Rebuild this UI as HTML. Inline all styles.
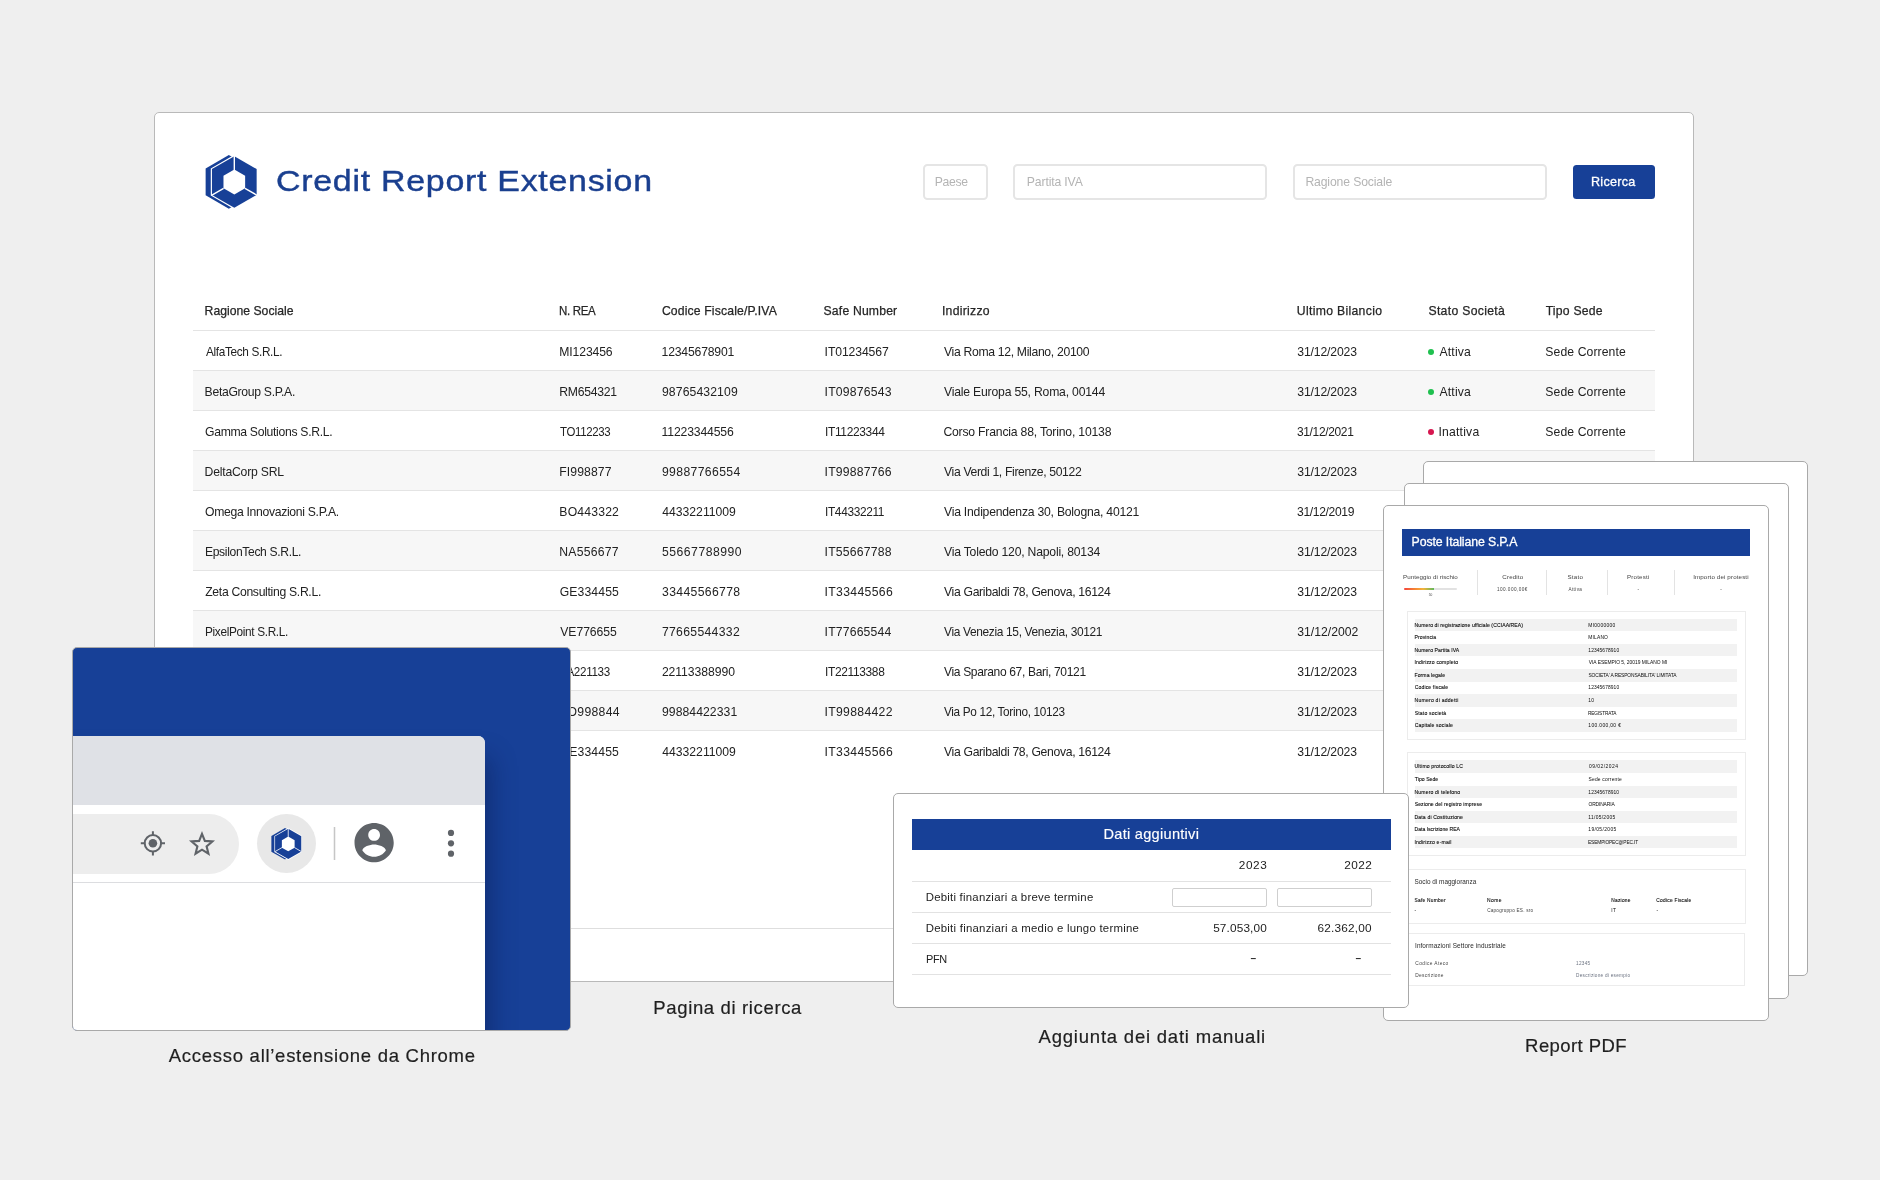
<!DOCTYPE html>
<html lang="it"><head><meta charset="utf-8"><title>Credit Report Extension</title>
<style>
*{box-sizing:border-box;margin:0;padding:0}
html,body{width:1880px;height:1180px;overflow:hidden}
body{background:#efefef;font-family:"Liberation Sans",sans-serif;color:#222;position:relative}
#root{position:absolute;left:0;top:0;width:1880px;height:1180px;will-change:transform}
.abs{position:absolute}
.t{position:absolute;white-space:nowrap;line-height:1}
.panel{position:absolute;left:154px;top:112px;width:1540px;height:870px;background:#fff;border:1px solid #b9b9b9;border-radius:5px}
.title{color:#1a3f8f;-webkit-text-stroke:0.4px #1a3f8f}
.inp{position:absolute;height:36px;top:164px;border:2px solid #e5e5e5;border-radius:4.5px;background:#fff}
.ph{color:#b4b4b4}
.btn{position:absolute;left:1573px;top:165px;width:81.5px;height:34px;background:#174097;border-radius:3.5px}
.th{color:#262626;-webkit-text-stroke:0.25px #262626}
.td{color:#222}
.rowbg{position:absolute;left:193px;width:1461.5px;height:40px;background:#f7f7f7}
.line{position:absolute;left:193px;width:1461.5px;height:1px;background:#e4e4e4}
.dot{position:absolute;width:6px;height:6px;border-radius:50%}
.cap{color:#1f1f1f;-webkit-text-stroke:0.2px #1f1f1f}
.card{position:absolute;background:#fff;border:1px solid #a9a9a9;border-radius:5px}
.w{color:#fff}
.ws{color:#fff;-webkit-text-stroke:0.3px #fff}
.wm{color:#fff;-webkit-text-stroke:0.15px #fff}
.p5{color:#0a0a0a}
.p5b{color:#0a0a0a;-webkit-text-stroke:0.1px #0a0a0a}
.g5{color:#444}
.g6{color:#6b7280}
.p6{color:#2b2b2b}
.stripe{position:absolute;left:1414.7px;width:322.5px;height:12.4px;background:#f2f2f2}
.pbox{position:absolute;border:1px solid #ececec;background:#fff}
</style></head><body><div id="root">

<div class="panel"></div>
<svg width="0" height="0" style="position:absolute"><defs>
<symbol id="logo" viewBox="0 0 52 54">
<g transform="translate(-205,-155)">
<polygon fill="#174097" points="228.84,155.1 252.05,168.5 252.05,195.3 228.84,208.7 205.63,195.3 205.63,168.5"/>
<polygon fill="#174097" stroke="#fff" stroke-width="2.4" paint-order="stroke" stroke-linejoin="miter" points="234.31,156.2 256.65,169.1 256.65,194.9 234.31,207.8 211.97,194.9 211.97,169.1"/>
<polygon fill="#fff" points="234.31,169.6 245.14,175.85 245.14,188.35 234.31,194.6 223.48,188.35 223.48,175.85"/>
<path d="M234.31,155.5 V170 M223.6,188.3 L211.5,195.3 M245.0,188.3 L257.1,195.3" stroke="#fff" stroke-width="1.4" fill="none"/>
</g></symbol></defs></svg>
<svg class="abs" style="left:205px;top:155px" width="52" height="54"><use href="#logo"/></svg>
<span class="t title" style="font-size:29px;top:167px;letter-spacing:0.616px;transform:scaleX(1.1700);transform-origin:0 0;left:275.70px;">Credit Report Extension</span>
<div class="inp" style="left:923px;width:65px"></div>
<div class="inp" style="left:1013px;width:254px"></div>
<div class="inp" style="left:1293px;width:254px"></div>
<span class="t ph" style="font-size:12.2px;top:176px;letter-spacing:-0.281px;left:934.72px;">Paese</span>
<span class="t ph" style="font-size:12.2px;top:176px;letter-spacing:-0.132px;left:1026.82px;">Partita IVA</span>
<span class="t ph" style="font-size:12.2px;top:176px;letter-spacing:-0.132px;left:1305.42px;">Ragione Sociale</span>
<div class="btn"></div>
<span class="t ws" style="font-size:12.6px;top:176px;letter-spacing:0.289px;left:1590.94px;">Ricerca</span>
<span class="t th" style="font-size:12.2px;top:305px;letter-spacing:0.011px;left:204.62px;">Ragione Sociale</span>
<span class="t th" style="font-size:12.2px;top:305px;letter-spacing:-0.350px;transform:scaleX(0.9420);transform-origin:0 0;left:559.38px;">N. REA</span>
<span class="t th" style="font-size:12.2px;top:305px;letter-spacing:0.152px;left:661.89px;">Codice Fiscale/P.IVA</span>
<span class="t th" style="font-size:12.2px;top:305px;letter-spacing:0.181px;left:823.55px;">Safe Number</span>
<span class="t th" style="font-size:12.2px;top:305px;letter-spacing:0.293px;left:941.90px;">Indirizzo</span>
<span class="t th" style="font-size:12.2px;top:305px;letter-spacing:0.326px;left:1296.79px;">Ultimo Bilancio</span>
<span class="t th" style="font-size:12.2px;top:305px;letter-spacing:0.322px;left:1428.45px;">Stato Società</span>
<span class="t th" style="font-size:12.2px;top:305px;letter-spacing:0.223px;left:1545.66px;">Tipo Sede</span>
<div class="line" style="top:330px"></div>
<div class="line" style="top:370px"></div>
<span class="t td" style="font-size:12.2px;top:346px;letter-spacing:-0.350px;transform:scaleX(0.9677);transform-origin:0 0;left:205.60px;">AlfaTech S.R.L.</span>
<span class="t td" style="font-size:12.2px;top:346px;letter-spacing:-0.124px;left:559.32px;">MI123456</span>
<span class="t td" style="font-size:12.2px;top:346px;letter-spacing:-0.184px;left:661.59px;">12345678901</span>
<span class="t td" style="font-size:12.2px;top:346px;letter-spacing:-0.104px;left:824.60px;">IT01234567</span>
<span class="t td" style="font-size:12.2px;top:346px;letter-spacing:-0.320px;left:944.00px;">Via Roma 12, Milano, 20100</span>
<span class="t td" style="font-size:12.2px;top:346px;letter-spacing:-0.138px;left:1297.27px;">31/12/2023</span>
<span class="t td" style="font-size:12.2px;top:346px;letter-spacing:0.168px;left:1439.50px;">Attiva</span>
<span class="t td" style="font-size:12.2px;top:346px;letter-spacing:0.090px;left:1545.35px;">Sede Corrente</span>
<div class="dot" style="left:1427.7px;top:348.5px;background:#1fc04f"></div>
<div class="rowbg" style="top:370.5px"></div>
<div class="line" style="top:410px"></div>
<span class="t td" style="font-size:12.2px;top:386px;letter-spacing:-0.309px;left:204.62px;">BetaGroup S.P.A.</span>
<span class="t td" style="font-size:12.2px;top:386px;letter-spacing:-0.276px;left:559.32px;">RM654321</span>
<span class="t td" style="font-size:12.2px;top:386px;letter-spacing:0.120px;left:661.95px;">98765432109</span>
<span class="t td" style="font-size:12.2px;top:386px;letter-spacing:0.211px;left:824.60px;">IT09876543</span>
<span class="t td" style="font-size:12.2px;top:386px;letter-spacing:-0.196px;left:944.00px;">Viale Europa 55, Roma, 00144</span>
<span class="t td" style="font-size:12.2px;top:386px;letter-spacing:-0.138px;left:1297.27px;">31/12/2023</span>
<span class="t td" style="font-size:12.2px;top:386px;letter-spacing:0.168px;left:1439.50px;">Attiva</span>
<span class="t td" style="font-size:12.2px;top:386px;letter-spacing:0.090px;left:1545.35px;">Sede Corrente</span>
<div class="dot" style="left:1427.7px;top:388.5px;background:#1fc04f"></div>
<div class="line" style="top:450px"></div>
<span class="t td" style="font-size:12.2px;top:426px;letter-spacing:-0.307px;left:204.99px;">Gamma Solutions S.R.L.</span>
<span class="t td" style="font-size:12.2px;top:426px;letter-spacing:-0.350px;transform:scaleX(0.9380);transform-origin:0 0;left:560.07px;">TO112233</span>
<span class="t td" style="font-size:12.2px;top:426px;letter-spacing:-0.155px;left:661.59px;">11223344556</span>
<span class="t td" style="font-size:12.2px;top:426px;letter-spacing:-0.350px;transform:scaleX(0.9819);transform-origin:0 0;left:824.62px;">IT11223344</span>
<span class="t td" style="font-size:12.2px;top:426px;letter-spacing:-0.195px;left:943.39px;">Corso Francia 88, Torino, 10138</span>
<span class="t td" style="font-size:12.2px;top:426px;letter-spacing:-0.350px;transform:scaleX(0.9818);transform-origin:0 0;left:1297.28px;">31/12/2021</span>
<span class="t td" style="font-size:12.2px;top:426px;letter-spacing:0.213px;left:1438.40px;">Inattiva</span>
<span class="t td" style="font-size:12.2px;top:426px;letter-spacing:0.090px;left:1545.35px;">Sede Corrente</span>
<div class="dot" style="left:1427.7px;top:428.5px;background:#d6164f"></div>
<div class="rowbg" style="top:450.5px"></div>
<div class="line" style="top:490px"></div>
<span class="t td" style="font-size:12.2px;top:466px;letter-spacing:-0.209px;left:204.62px;">DeltaCorp SRL</span>
<span class="t td" style="font-size:12.2px;top:466px;letter-spacing:0.097px;left:559.32px;">FI998877</span>
<span class="t td" style="font-size:12.2px;top:466px;letter-spacing:0.375px;left:661.95px;">99887766554</span>
<span class="t td" style="font-size:12.2px;top:466px;letter-spacing:0.200px;left:824.60px;">IT99887766</span>
<span class="t td" style="font-size:12.2px;top:466px;letter-spacing:-0.350px;transform:scaleX(1.0000);transform-origin:0 0;left:944.00px;">Via Verdi 1, Firenze, 50122</span>
<span class="t td" style="font-size:12.2px;top:466px;letter-spacing:-0.138px;left:1297.27px;">31/12/2023</span>
<span class="t td" style="font-size:12.2px;top:466px;letter-spacing:0.168px;left:1439.50px;">Attiva</span>
<span class="t td" style="font-size:12.2px;top:466px;letter-spacing:0.090px;left:1545.35px;">Sede Corrente</span>
<div class="dot" style="left:1427.7px;top:468.5px;background:#1fc04f"></div>
<div class="line" style="top:530px"></div>
<span class="t td" style="font-size:12.2px;top:506px;letter-spacing:-0.316px;left:205.05px;">Omega Innovazioni S.P.A.</span>
<span class="t td" style="font-size:12.2px;top:506px;letter-spacing:0.187px;left:559.32px;">BO443322</span>
<span class="t td" style="font-size:12.2px;top:506px;letter-spacing:-0.006px;left:662.26px;">44332211009</span>
<span class="t td" style="font-size:12.2px;top:506px;letter-spacing:-0.350px;transform:scaleX(0.9742);transform-origin:0 0;left:824.63px;">IT44332211</span>
<span class="t td" style="font-size:12.2px;top:506px;letter-spacing:-0.227px;left:944.00px;">Via Indipendenza 30, Bologna, 40121</span>
<span class="t td" style="font-size:12.2px;top:506px;letter-spacing:-0.350px;transform:scaleX(0.9924);transform-origin:0 0;left:1297.28px;">31/12/2019</span>
<span class="t td" style="font-size:12.2px;top:506px;letter-spacing:0.213px;left:1438.40px;">Inattiva</span>
<span class="t td" style="font-size:12.2px;top:506px;letter-spacing:0.090px;left:1545.35px;">Sede Corrente</span>
<div class="dot" style="left:1427.7px;top:508.5px;background:#d6164f"></div>
<div class="rowbg" style="top:530.5px"></div>
<div class="line" style="top:570px"></div>
<span class="t td" style="font-size:12.2px;top:546px;letter-spacing:-0.350px;transform:scaleX(0.9940);transform-origin:0 0;left:204.63px;">EpsilonTech S.R.L.</span>
<span class="t td" style="font-size:12.2px;top:546px;letter-spacing:0.226px;left:559.32px;">NA556677</span>
<span class="t td" style="font-size:12.2px;top:546px;letter-spacing:0.501px;left:662.01px;">55667788990</span>
<span class="t td" style="font-size:12.2px;top:546px;letter-spacing:0.200px;left:824.60px;">IT55667788</span>
<span class="t td" style="font-size:12.2px;top:546px;letter-spacing:-0.211px;left:944.00px;">Via Toledo 120, Napoli, 80134</span>
<span class="t td" style="font-size:12.2px;top:546px;letter-spacing:-0.138px;left:1297.27px;">31/12/2023</span>
<span class="t td" style="font-size:12.2px;top:546px;letter-spacing:0.168px;left:1439.50px;">Attiva</span>
<span class="t td" style="font-size:12.2px;top:546px;letter-spacing:0.090px;left:1545.35px;">Sede Corrente</span>
<div class="dot" style="left:1427.7px;top:548.5px;background:#1fc04f"></div>
<div class="line" style="top:610px"></div>
<span class="t td" style="font-size:12.2px;top:586px;letter-spacing:-0.311px;left:205.23px;">Zeta Consulting S.R.L.</span>
<span class="t td" style="font-size:12.2px;top:586px;letter-spacing:0.126px;left:559.69px;">GE334455</span>
<span class="t td" style="font-size:12.2px;top:586px;letter-spacing:0.341px;left:662.07px;">33445566778</span>
<span class="t td" style="font-size:12.2px;top:586px;letter-spacing:0.344px;left:824.60px;">IT33445566</span>
<span class="t td" style="font-size:12.2px;top:586px;letter-spacing:-0.326px;left:944.00px;">Via Garibaldi 78, Genova, 16124</span>
<span class="t td" style="font-size:12.2px;top:586px;letter-spacing:-0.138px;left:1297.27px;">31/12/2023</span>
<span class="t td" style="font-size:12.2px;top:586px;letter-spacing:0.168px;left:1439.50px;">Attiva</span>
<span class="t td" style="font-size:12.2px;top:586px;letter-spacing:0.090px;left:1545.35px;">Sede Corrente</span>
<div class="dot" style="left:1427.7px;top:588.5px;background:#1fc04f"></div>
<div class="rowbg" style="top:610.5px"></div>
<div class="line" style="top:650px"></div>
<span class="t td" style="font-size:12.2px;top:626px;letter-spacing:-0.350px;transform:scaleX(0.9704);transform-origin:0 0;left:204.65px;">PixelPoint S.R.L.</span>
<span class="t td" style="font-size:12.2px;top:626px;letter-spacing:-0.069px;left:560.30px;">VE776655</span>
<span class="t td" style="font-size:12.2px;top:626px;letter-spacing:0.326px;left:661.89px;">77665544332</span>
<span class="t td" style="font-size:12.2px;top:626px;letter-spacing:0.180px;left:824.60px;">IT77665544</span>
<span class="t td" style="font-size:12.2px;top:626px;letter-spacing:-0.350px;transform:scaleX(0.9797);transform-origin:0 0;left:944.00px;">Via Venezia 15, Venezia, 30121</span>
<span class="t td" style="font-size:12.2px;top:626px;letter-spacing:0.013px;left:1297.27px;">31/12/2002</span>
<span class="t td" style="font-size:12.2px;top:626px;letter-spacing:0.213px;left:1438.40px;">Inattiva</span>
<span class="t td" style="font-size:12.2px;top:626px;letter-spacing:0.090px;left:1545.35px;">Sede Corrente</span>
<div class="dot" style="left:1427.7px;top:628.5px;background:#d6164f"></div>
<div class="line" style="top:690px"></div>
<span class="t td" style="font-size:12.2px;top:666px;left:205.05px;letter-spacing:-0.4px;">Sigma Digital S.R.L.</span>
<span class="t td" style="font-size:12.2px;top:666px;letter-spacing:-0.350px;transform:scaleX(0.9550);transform-origin:0 0;left:559.37px;">BA221133</span>
<span class="t td" style="font-size:12.2px;top:666px;letter-spacing:-0.061px;left:661.89px;">22113388990</span>
<span class="t td" style="font-size:12.2px;top:666px;letter-spacing:-0.350px;transform:scaleX(0.9799);transform-origin:0 0;left:824.62px;">IT22113388</span>
<span class="t td" style="font-size:12.2px;top:666px;letter-spacing:-0.350px;transform:scaleX(0.9881);transform-origin:0 0;left:944.00px;">Via Sparano 67, Bari, 70121</span>
<span class="t td" style="font-size:12.2px;top:666px;letter-spacing:-0.138px;left:1297.27px;">31/12/2023</span>
<span class="t td" style="font-size:12.2px;top:666px;letter-spacing:0.168px;left:1439.50px;">Attiva</span>
<span class="t td" style="font-size:12.2px;top:666px;letter-spacing:0.090px;left:1545.35px;">Sede Corrente</span>
<div class="dot" style="left:1427.7px;top:668.5px;background:#1fc04f"></div>
<div class="rowbg" style="top:690.5px"></div>
<div class="line" style="top:730px"></div>
<span class="t td" style="font-size:12.2px;top:706px;left:204.62px;letter-spacing:-0.4px;">Kappa Service S.R.L.</span>
<span class="t td" style="font-size:12.2px;top:706px;letter-spacing:0.307px;left:560.06px;">TO998844</span>
<span class="t td" style="font-size:12.2px;top:706px;letter-spacing:0.070px;left:661.95px;">99884422331</span>
<span class="t td" style="font-size:12.2px;top:706px;letter-spacing:0.307px;left:824.60px;">IT99884422</span>
<span class="t td" style="font-size:12.2px;top:706px;letter-spacing:-0.350px;transform:scaleX(0.9677);transform-origin:0 0;left:944.00px;">Via Po 12, Torino, 10123</span>
<span class="t td" style="font-size:12.2px;top:706px;letter-spacing:-0.138px;left:1297.27px;">31/12/2023</span>
<span class="t td" style="font-size:12.2px;top:706px;letter-spacing:0.168px;left:1439.50px;">Attiva</span>
<span class="t td" style="font-size:12.2px;top:706px;letter-spacing:0.090px;left:1545.35px;">Sede Corrente</span>
<div class="dot" style="left:1427.7px;top:708.5px;background:#1fc04f"></div>
<span class="t td" style="font-size:12.2px;top:746px;letter-spacing:-0.311px;left:205.23px;">Zeta Consulting S.R.L.</span>
<span class="t td" style="font-size:12.2px;top:746px;letter-spacing:0.126px;left:559.69px;">GE334455</span>
<span class="t td" style="font-size:12.2px;top:746px;letter-spacing:-0.006px;left:662.26px;">44332211009</span>
<span class="t td" style="font-size:12.2px;top:746px;letter-spacing:0.344px;left:824.60px;">IT33445566</span>
<span class="t td" style="font-size:12.2px;top:746px;letter-spacing:-0.326px;left:944.00px;">Via Garibaldi 78, Genova, 16124</span>
<span class="t td" style="font-size:12.2px;top:746px;letter-spacing:-0.138px;left:1297.27px;">31/12/2023</span>
<span class="t td" style="font-size:12.2px;top:746px;letter-spacing:0.168px;left:1439.50px;">Attiva</span>
<span class="t td" style="font-size:12.2px;top:746px;letter-spacing:0.090px;left:1545.35px;">Sede Corrente</span>
<div class="dot" style="left:1427.7px;top:748.5px;background:#1fc04f"></div>
<div class="line" style="left:155px;width:1538px;top:928px;background:#dedede"></div>
<!-- chrome extension card -->
<div class="card" style="left:72px;top:647px;width:499px;height:384px;background:#174097;overflow:hidden">
 <div class="abs" style="left:-73px;top:-648px;width:1880px;height:1180px">
  <div class="abs" style="left:20px;top:736px;width:465px;height:330px;border-radius:0 7px 0 0;background:#fff;box-shadow:13px 14px 24px -8px rgba(6,18,66,.42)"></div>
  <div class="abs" style="left:20px;top:736px;width:465px;height:69px;border-radius:0 7px 0 0;background:#dfe1e6"></div>
  <div class="abs" style="left:60px;top:882px;width:425px;height:1px;background:#dcdde0"></div>
  <div class="abs" style="left:0px;top:813.6px;width:239.4px;height:60px;border-radius:30px;background:#ededed"></div>
  <div class="abs" style="left:256.8px;top:813.8px;width:59.4px;height:59.4px;border-radius:50%;background:#e8e8e8"></div>
  <svg class="abs" style="left:271px;top:827.8px" width="30.6" height="31.8"><use href="#logo"/></svg>
  <div class="abs" style="left:333px;top:826.5px;width:3px;height:33.8px;background:linear-gradient(90deg,#f0f0f0 0,#f0f0f0 33.3%,#c6c6c6 33.3%,#c6c6c6 66.6%,#f0f0f0 66.6%)"></div>
  <svg class="abs" style="left:73px;top:648px" width="498" height="383" viewBox="73 648 498 383">
    <g fill="none" stroke="#5f6368" stroke-width="2">
      <circle cx="152.9" cy="843.3" r="8.2"/>
      <path d="M152.9,831.2V835.6M152.9,851V855.4M140.8,843.3H145.2M160.6,843.3H165"/>
    </g>
    <circle cx="152.9" cy="843.3" r="4.3" fill="#5f6368"/>
    <path fill="none" stroke="#5f6368" stroke-width="2.1" stroke-linejoin="miter" d="M202,833.8 L204.85,840.9 L212.4,841.45 L206.6,846.35 L208.45,853.75 L202,849.7 L195.55,853.75 L197.4,846.35 L191.6,841.45 L199.15,840.9 Z"/>
    <g transform="translate(350.6,819.2) scale(1.96)"><path fill="#5f6368" d="M12 2C6.48 2 2 6.48 2 12s4.48 10 10 10 10-4.48 10-10S17.52 2 12 2zm0 3c1.66 0 3 1.34 3 3s-1.34 3-3 3-3-1.34-3-3 1.34-3 3-3zm0 14.2c-2.5 0-4.71-1.28-6-3.22.03-1.99 4-3.08 6-3.08 1.99 0 5.97 1.09 6 3.08-1.29 1.94-3.5 3.22-6 3.22z"/></g>
    <g fill="#5f6368"><circle cx="451" cy="832.9" r="3.1"/><circle cx="451" cy="843.3" r="3.1"/><circle cx="451" cy="853.7" r="3.1"/></g>
  </svg>
 </div>
</div>

<div class="card" style="left:1423px;top:461px;width:385px;height:515px"></div>
<div class="card" style="left:1404px;top:483px;width:385px;height:516px"></div>
<div class="card" style="left:1383px;top:505px;width:386px;height:516px"></div>
<div class="abs" style="left:1402px;top:528.8px;width:347.8px;height:27.1px;background:#174097"></div>
<span class="t ws" style="font-size:12.3px;top:536px;letter-spacing:-0.107px;left:1411.62px;">Poste Italiane S.P.A</span>
<span class="t g5" style="font-size:6.2px;top:574px;letter-spacing:0.034px;left:1403.10px;">Punteggio di rischio</span>
<div class="abs" style="left:1403.6px;top:587.9px;width:53.8px;height:1.7px;border-radius:1px;background:linear-gradient(90deg,#f4433c 0,#f58a34 22%,#f3b33d 36%,#5cb85c 57%,#5cb85c 57.2%,#e2e2e2 57.2%)"></div>
<span class="t g5" style="font-size:3.2px;top:594px;left:1428.82px;">50</span>
<div class="abs" style="left:1477.4px;top:570px;width:1px;height:25.4px;background:#e3e3e3"></div>
<div class="abs" style="left:1545.6px;top:570px;width:1px;height:25.4px;background:#e3e3e3"></div>
<div class="abs" style="left:1606.5px;top:570px;width:1px;height:25.4px;background:#e3e3e3"></div>
<div class="abs" style="left:1674.1px;top:570px;width:1px;height:25.4px;background:#e3e3e3"></div>
<span class="t g5" style="font-size:6.2px;top:574px;letter-spacing:0.144px;left:1502.34px;">Credito</span>
<span class="t g5" style="font-size:4.6px;top:588px;letter-spacing:0.452px;transform:scaleX(1.0098);transform-origin:0 0;left:1497.45px;">100.000,00€</span>
<span class="t g5" style="font-size:6.2px;top:574px;letter-spacing:0.263px;left:1567.42px;">Stato</span>
<span class="t g5" style="font-size:4.6px;top:588px;letter-spacing:0.395px;left:1568.45px;">Attiva</span>
<span class="t g5" style="font-size:6.2px;top:574px;letter-spacing:0.169px;left:1627.05px;">Protesti</span>
<span class="t g5" style="font-size:4.6px;top:588px;left:1637.44px;">-</span>
<span class="t g5" style="font-size:6.2px;top:574px;letter-spacing:0.131px;left:1693.14px;">Importo dei protesti</span>
<span class="t g5" style="font-size:4.6px;top:588px;left:1720.24px;">-</span>
<div class="pbox" style="left:1406.8px;top:611px;width:339px;height:128.7px"></div>
<div class="stripe" style="top:619.00px"></div>
<span class="t p5b" style="font-size:5.1px;top:623px;letter-spacing:0.082px;left:1414.49px;">Numero di registrazione ufficiale (CCIAA/REA)</span>
<span class="t p5" style="font-size:4.9px;top:624px;letter-spacing:0.305px;left:1588.31px;">MI0000000</span>
<span class="t p5b" style="font-size:5.1px;top:635px;letter-spacing:0.090px;left:1414.49px;">Provincia</span>
<span class="t p5" style="font-size:4.9px;top:636px;letter-spacing:0.169px;left:1588.31px;">MILANO</span>
<div class="stripe" style="top:644.08px"></div>
<span class="t p5b" style="font-size:5.1px;top:648px;letter-spacing:0.074px;left:1414.49px;">Numero Partita IVA</span>
<span class="t p5" style="font-size:4.9px;top:649px;letter-spacing:0.088px;left:1588.33px;">12345678910</span>
<span class="t p5b" style="font-size:5.1px;top:660px;letter-spacing:0.156px;left:1414.44px;">Indirizzo completo</span>
<span class="t p5" style="font-size:4.9px;top:661px;letter-spacing:0.004px;left:1588.70px;">VIA ESEMPIO 5, 20019 MILANO MI</span>
<div class="stripe" style="top:669.16px"></div>
<span class="t p5b" style="font-size:5.1px;top:673px;letter-spacing:0.078px;left:1414.49px;">Forma legale</span>
<span class="t p5" style="font-size:4.9px;top:674px;letter-spacing:-0.127px;left:1588.48px;">SOCIETA' A RESPONSABILITA' LIMITATA</span>
<span class="t p5b" style="font-size:5.1px;top:685px;letter-spacing:0.139px;left:1414.64px;">Codice fiscale</span>
<span class="t p5" style="font-size:4.9px;top:686px;letter-spacing:0.088px;left:1588.33px;">12345678910</span>
<div class="stripe" style="top:694.24px"></div>
<span class="t p5b" style="font-size:5.1px;top:698px;letter-spacing:0.225px;left:1414.49px;">Numero di addetti</span>
<span class="t p5" style="font-size:4.9px;top:699px;letter-spacing:0.200px;left:1588.33px;">10</span>
<span class="t p5b" style="font-size:5.1px;top:711px;letter-spacing:0.169px;left:1414.67px;">Stato società</span>
<span class="t p5" style="font-size:4.9px;top:712px;letter-spacing:-0.141px;transform:scaleX(0.9751);transform-origin:0 0;left:1588.32px;">REGISTRATA</span>
<div class="stripe" style="top:719.32px"></div>
<span class="t p5b" style="font-size:5.1px;top:723px;letter-spacing:0.150px;left:1414.64px;">Capitale sociale</span>
<span class="t p5" style="font-size:4.9px;top:724px;letter-spacing:0.364px;left:1588.33px;">100.000,00 €</span>
<div class="pbox" style="left:1406.8px;top:752.3px;width:339px;height:104px"></div>
<div class="stripe" style="top:760.40px"></div>
<span class="t p5b" style="font-size:5.1px;top:764px;letter-spacing:0.135px;left:1414.52px;">Ultimo protocollo LC</span>
<span class="t p5" style="font-size:4.9px;top:765px;letter-spacing:0.482px;transform:scaleX(1.0081);transform-origin:0 0;left:1588.53px;">09/02/2024</span>
<span class="t p5b" style="font-size:5.1px;top:777px;letter-spacing:0.044px;left:1414.80px;">Tipo Sede</span>
<span class="t p5" style="font-size:4.9px;top:778px;letter-spacing:0.220px;left:1588.48px;">Sede corrente</span>
<div class="stripe" style="top:785.56px"></div>
<span class="t p5b" style="font-size:5.1px;top:790px;letter-spacing:0.154px;left:1414.49px;">Numero di telefono</span>
<span class="t p5" style="font-size:4.9px;top:791px;letter-spacing:0.078px;left:1588.33px;">12345678910</span>
<span class="t p5b" style="font-size:5.1px;top:802px;letter-spacing:0.104px;left:1414.67px;">Sezione del registro imprese</span>
<span class="t p5" style="font-size:4.9px;top:803px;letter-spacing:-0.125px;left:1588.48px;">ORDINARIA</span>
<div class="stripe" style="top:810.72px"></div>
<span class="t p5b" style="font-size:5.1px;top:815px;letter-spacing:0.151px;left:1414.49px;">Data di Costituzione</span>
<span class="t p5" style="font-size:4.9px;top:816px;letter-spacing:0.301px;left:1588.33px;">11/05/2005</span>
<span class="t p5b" style="font-size:5.1px;top:827px;letter-spacing:-0.006px;left:1414.49px;">Data Iscrizione REA</span>
<span class="t p5" style="font-size:4.9px;top:828px;letter-spacing:0.382px;left:1588.33px;">19/05/2005</span>
<div class="stripe" style="top:835.88px"></div>
<span class="t p5b" style="font-size:5.1px;top:840px;letter-spacing:0.180px;left:1414.44px;">Indirizzo e-mail</span>
<span class="t p5" style="font-size:4.9px;top:841px;letter-spacing:-0.141px;transform:scaleX(0.9876);transform-origin:0 0;left:1588.31px;">ESEMPIOPEC@PEC.IT</span>
<div class="pbox" style="left:1406.8px;top:869px;width:339px;height:55.2px"></div>
<span class="t p6" style="font-size:6.4px;top:879px;letter-spacing:0.017px;left:1414.41px;">Socio di maggioranza</span>
<span class="t p5b" style="font-size:4.8px;top:899px;letter-spacing:0.279px;left:1414.48px;">Safe Number</span>
<span class="t p5b" style="font-size:4.8px;top:899px;letter-spacing:0.472px;transform:scaleX(1.0270);transform-origin:0 0;left:1487.01px;">Nome</span>
<span class="t p5b" style="font-size:4.8px;top:899px;letter-spacing:0.277px;left:1611.22px;">Nazione</span>
<span class="t p5b" style="font-size:4.8px;top:899px;letter-spacing:0.259px;left:1656.36px;">Codice Fiscale</span>
<span class="t p5" style="font-size:4.7px;top:909px;left:1414.51px;">-</span>
<span class="t g5" style="font-size:4.7px;top:909px;letter-spacing:0.202px;left:1487.17px;">Capogruppo ES. sro</span>
<span class="t p5" style="font-size:4.9px;top:909px;letter-spacing:0.378px;left:1611.16px;">IT</span>
<span class="t p5" style="font-size:4.7px;top:909px;left:1656.41px;">-</span>
<div class="pbox" style="left:1408.3px;top:932.7px;width:336.7px;height:53.5px"></div>
<span class="t p6" style="font-size:6.4px;top:943px;letter-spacing:0.084px;left:1415.02px;">Informazioni Settore industriale</span>
<span class="t g5" style="font-size:4.8px;top:962px;letter-spacing:0.415px;left:1415.36px;">Codice Ateco</span>
<span class="t g6" style="font-size:4.7px;top:962px;letter-spacing:0.269px;left:1576.05px;">12345</span>
<span class="t g5" style="font-size:4.8px;top:974px;letter-spacing:0.320px;left:1415.22px;">Descrizione</span>
<span class="t g6" style="font-size:4.7px;top:974px;letter-spacing:0.266px;left:1576.02px;">Descrizione di esempio</span>
<div class="card" style="left:893px;top:793px;width:516px;height:215px"></div>
<div class="abs" style="left:912px;top:819px;width:479px;height:30.6px;background:#174097"></div>
<span class="t wm" style="font-size:14.6px;top:827px;letter-spacing:0.274px;left:1103.43px;">Dati aggiuntivi</span>
<span class="t td" style="font-size:11.8px;top:860px;letter-spacing:0.636px;left:1238.71px;">2023</span>
<span class="t td" style="font-size:11.8px;top:860px;letter-spacing:0.455px;left:1344.21px;">2022</span>
<div class="abs" style="left:912px;top:881px;width:479px;height:1px;background:#e2e2e2"></div>
<div class="abs" style="left:912px;top:912px;width:479px;height:1px;background:#e2e2e2"></div>
<div class="abs" style="left:912px;top:943px;width:479px;height:1px;background:#e2e2e2"></div>
<div class="abs" style="left:912px;top:974px;width:479px;height:1px;background:#e2e2e2"></div>
<span class="t td" style="font-size:11.4px;top:892px;letter-spacing:0.231px;left:925.69px;">Debiti finanziari a breve termine</span>
<div class="abs" style="left:1172px;top:888px;width:95px;height:18.6px;border:1px solid #cfcfcf;border-radius:2px;background:#fff"></div>
<div class="abs" style="left:1277px;top:888px;width:95.4px;height:18.6px;border:1px solid #cfcfcf;border-radius:2px;background:#fff"></div>
<span class="t td" style="font-size:11.4px;top:923px;letter-spacing:0.250px;left:925.69px;">Debiti finanziari a medio e lungo termine</span>
<span class="t td" style="font-size:11.8px;top:923px;letter-spacing:0.147px;left:1213.13px;">57.053,00</span>
<span class="t td" style="font-size:11.8px;top:923px;letter-spacing:0.224px;left:1317.41px;">62.362,00</span>
<span class="t td" style="font-size:11.4px;top:954px;letter-spacing:-0.327px;transform:scaleX(0.9618);transform-origin:0 0;left:925.72px;">PFN</span>
<span class="t td" style="font-size:12.4px;top:952px;transform:scaleX(1.6129);transform-origin:0 0;left:1249.80px;">-</span>
<span class="t td" style="font-size:12.4px;top:952px;transform:scaleX(1.6129);transform-origin:0 0;left:1355.10px;">-</span>
<span class="t cap" style="font-size:18.5px;top:1047px;letter-spacing:0.721px;left:168.80px;">Accesso all’estensione da Chrome</span>
<span class="t cap" style="font-size:18.5px;top:999px;letter-spacing:0.641px;left:653.32px;">Pagina di ricerca</span>
<span class="t cap" style="font-size:18.5px;top:1028px;letter-spacing:0.785px;left:1038.60px;">Aggiunta dei dati manuali</span>
<span class="t cap" style="font-size:18.5px;top:1037px;letter-spacing:0.416px;left:1525.12px;">Report PDF</span>
</div></body></html>
